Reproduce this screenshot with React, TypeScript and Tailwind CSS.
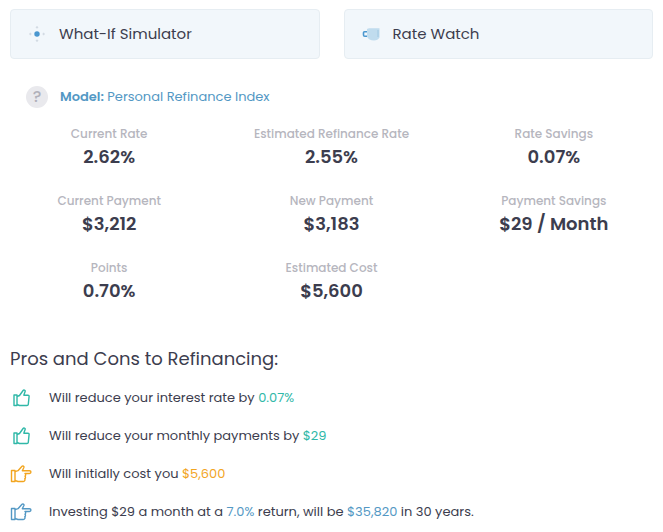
import type { ReactNode } from "react";

const stats = [
  { label: "Current Rate", value: "2.62%" },
  { label: "Estimated Refinance Rate", value: "2.55%" },
  { label: "Rate Savings", value: "0.07%" },
  { label: "Current Payment", value: "$3,212" },
  { label: "New Payment", value: "$3,183" },
  { label: "Payment Savings", value: "$29 / Month" },
  { label: "Points", value: "0.70%" },
  { label: "Estimated Cost", value: "$5,600" },
];

function SimulatorIcon() {
  return (
    <svg viewBox="0 0 20 20" className="size-5" fill="none" aria-hidden="true">
      <circle cx="10" cy="10" r="2.7" fill="#4a97cf" />
      <path
        d="M10 2v2.500M8.800 3.500h2.400M10 15.500V18M8.800 16.500h2.400M2 10h2.500M3.500 8.800v2.400M15.500 10H18M16.500 8.800v2.400"
        stroke="#d3dbe3"
        strokeWidth="1.2"
      />
    </svg>
  );
}

function WatchIcon() {
  return (
    <svg viewBox="0 0 20 20" className="size-5" fill="none" aria-hidden="true">
      <path d="M7 7.700H3.500a1 1 0 0 0-1 1v2.200a1.300 1.300 0 0 0 1.300 1.300H6" stroke="#4a97cf" strokeWidth="1.6" />
      <path d="M6 5C7.500 4.200 9 4.200 10 4.200H18.500v9.300c-1 2-3 3-5.500 3-3.500 0-6-1.500-7-4z" fill="#c0dcee" />
      <path d="M17 6v7" stroke="#a5cbe5" strokeWidth="1.2" />
    </svg>
  );
}

function ThumbIcon() {
  return (
    <svg
      viewBox="0 0 24 20"
      className="h-5 w-6"
      fill="none"
      stroke="currentColor"
      strokeWidth="1.4"
      strokeLinejoin="round"
      aria-hidden="true"
    >
      <path d="M4 7h3v10.500H4z" />
      <path d="M7 8.500 9.500 7.500l3.600-5c.6-.8 2.400-.4 2.100.8L13.800 7.200H18c.7 0 1.200.5 1.100 1.200l-.8 7.900c-.1.700-.6 1.200-1.300 1.200H9.500L7 16.500" />
    </svg>
  );
}

function PointIcon() {
  return (
    <svg
      viewBox="0 0 24 20"
      className="h-5 w-6"
      fill="none"
      stroke="currentColor"
      strokeWidth="1.4"
      strokeLinejoin="round"
      aria-hidden="true"
    >
      <path d="M1.500 6.500h3.500v11H1.500z" />
      <path d="M5 7.700 8 6.700l4-4.400c.8-.8 2.400.1 1.900 1.200L12.300 6.700h7.200c1.900 0 1.900 2.800 0 2.800H15c.9.300.9 2.200 0 2.600.7.500.6 2.200-.2 2.600.5 1.200 0 2.800-1.500 2.800H8l-3-1" />
    </svg>
  );
}

function ToolButton({ icon, children }: { icon: ReactNode; children: ReactNode }) {
  return (
    <button
      type="button"
      className="flex items-center gap-3 rounded border border-[#e6edf2] bg-[#f2f7fb] px-4 py-3 text-left text-[15px] leading-6"
    >
      {icon}
      {children}
    </button>
  );
}

function Point({ icon, children }: { icon: ReactNode; children: ReactNode }) {
  return (
    <li className="flex items-center gap-[15px]">
      {icon}
      <span>{children}</span>
    </li>
  );
}

export default function App() {
  return (
    <main className="bg-white px-[10px] py-[9px] font-['Poppins','Inter',sans-serif] text-[#3c3d4e]">
      <div className="grid grid-cols-2 gap-6">
        <ToolButton icon={<SimulatorIcon />}>What-If Simulator</ToolButton>
        <ToolButton icon={<WatchIcon />}>Rate Watch</ToolButton>
      </div>

      <section>
        <div className="mt-[27px] flex items-center gap-3 px-4 text-[13px] text-[#5398c4]">
          <button
            type="button"
            aria-label="About this model"
            className="size-[22px] rounded-full bg-[#e9e9ed] text-base leading-none font-medium text-[#b0b0ba]"
          >
            ?
          </button>
          <p>
            <strong className="font-semibold">Model:</strong> Personal Refinance Index
          </p>
        </div>

        <dl className="mt-4 grid grid-cols-3 gap-x-6 gap-y-[22px] text-center">
          {stats.map((stat) => (
            <div key={stat.label}>
              <dt className="text-xs leading-5 font-medium whitespace-nowrap text-[#b6b6be]">
                {stat.label}
              </dt>
              <dd className="text-lg leading-[25px] font-semibold">{stat.value}</dd>
            </div>
          ))}
        </dl>
      </section>

      <section className="mt-[42px]">
        <h2 className="text-lg">Pros and Cons to Refinancing:</h2>
        <ul className="mt-[15px] space-y-[18px] text-[13px] leading-5">
          <Point icon={<span className="text-[#30b8a8]"><ThumbIcon /></span>}>
            Will reduce your interest rate by <span className="text-[#30b8a8]">0.07%</span>
          </Point>
          <Point icon={<span className="text-[#30b8a8]"><ThumbIcon /></span>}>
            Will reduce your monthly payments by <span className="text-[#30b8a8]">$29</span>
          </Point>
          <Point icon={<span className="text-[#f2a51f]"><PointIcon /></span>}>
            Will initially cost you <span className="text-[#f2a51f]">$5,600</span>
          </Point>
          <Point icon={<span className="text-[#5398c4]"><PointIcon /></span>}>
            Investing $29 a month at a <span className="text-[#5398c4]">7.0%</span> return, will be{" "}
            <span className="text-[#5398c4]">$35,820</span> in 30 years.
          </Point>
        </ul>
      </section>
    </main>
  );
}
